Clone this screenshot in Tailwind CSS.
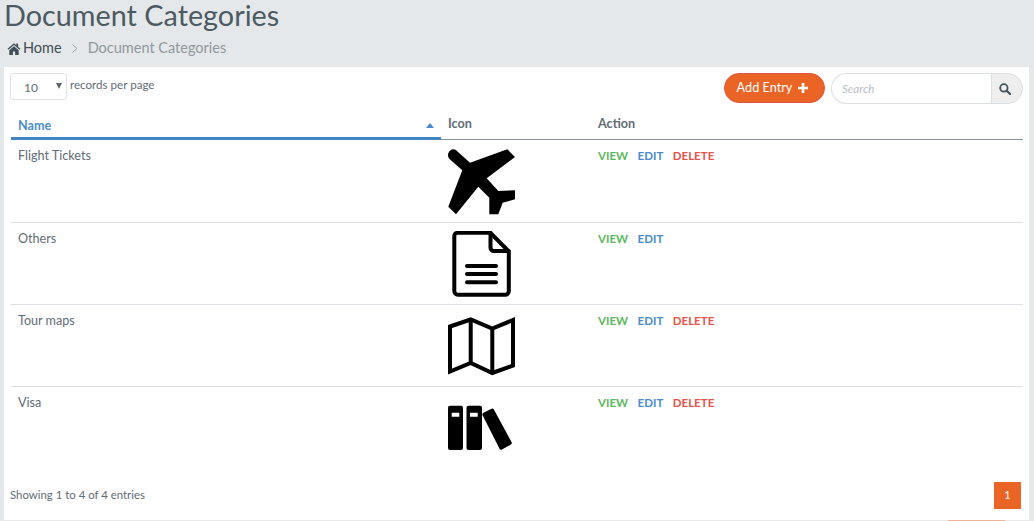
<!DOCTYPE html>
<html lang="en">

<head>
    <meta charset="UTF-8">
    <meta name="viewport" content="width=device-width, initial-scale=1.0">
    <title>Document Categories</title>
    <script src="https://cdn.jsdelivr.net/npm/@tailwindcss/browser@4"></script>
</head>

<body class="bg-[#e5e8ea] font-['Lato',sans-serif] text-[#5f6c74] overflow-hidden h-[521px]">

    <!-- Page heading -->
    <div class="h-[67px] pl-[4px]">
        <h1 class="text-[28.8px] leading-[30px] text-[#4c5a62]">Document Categories</h1>
        <div class="flex items-center h-[20px] mt-[8px] pl-[3px] text-[14.5px]">
            <svg class="w-[14px] h-[13px] mr-[2px] text-[#3f4d55]" viewBox="0 0 24 22" fill="currentColor">
                <path d="M12 2 L1 11.5 L2.6 13.3 L12 5.2 L21.4 13.3 L23 11.5 L19 8 V2.5 H16 V5.4 Z M4 14 V22 H10 V16 H14 V22 H20 V14 L12 7.2 Z" />
            </svg>
            <a href="#" class="text-[#3f4d55]">Home</a>
            <svg class="w-[7px] h-[9px] ml-[9px] mr-[10px] text-[#9aa3a8]" viewBox="0 0 7 9" fill="none" stroke="currentColor" stroke-width="1">
                <path d="M1.5 0.5 L6 4.5 L1.5 8.5" />
            </svg>
            <span class="text-[#8f989d]">Document Categories</span>
        </div>
    </div>

    <!-- Card -->
    <div class="bg-white ml-[4px] mr-[5px] h-[453px] pt-[6px] flex flex-col">

        <!-- Toolbar -->
        <div class="flex items-start h-[40px] pl-[6px] pr-[6px]">
            <div class="flex items-start">
                <div class="relative w-[57px] h-[27px] border border-[#dfe3e5] rounded-[3px] text-[12px] leading-[27px] pl-[13px]">
                    10
                    <span class="absolute right-[4px] top-[9px] w-0 h-0 border-l-[3.5px] border-r-[3.5px] border-t-[6px] border-l-transparent border-r-transparent border-t-[#5c666c]"></span>
                </div>
                <span class="ml-[3px] mt-[4px] text-[11.6px] leading-[16px]">records per page</span>
            </div>
            <div class="ml-auto flex items-start">
                <button class="flex items-center justify-center w-[101px] h-[30px] pb-[1px] pr-[4px] rounded-full bg-[#ea6426] border border-[#e4503f] text-white text-[12.7px]">
                    Add Entry
                    <svg class="w-[10px] h-[10px] ml-[6px]" viewBox="0 0 10 10" fill="white">
                        <path d="M3.7 0 H6.3 V3.7 H10 V6.3 H6.3 V10 H3.7 V6.3 H0 V3.7 H3.7 Z" />
                    </svg>
                </button>
                <div class="flex w-[192px] h-[31px] ml-[6px]">
                    <div class="flex-1 border border-r-0 border-[#dcdfe1] rounded-l-full pl-[10px] text-[11.5px] italic text-[#b8c0c5] leading-[29px]">Search</div>
                    <div class="w-[32px] flex items-center justify-center bg-[#eeeeee] border border-[#dcdfe1] rounded-r-full pr-[5px]">
                        <svg class="w-[12px] h-[12px]" viewBox="0 0 13 13" fill="none" stroke="#46535b" stroke-width="2">
                            <circle cx="5.3" cy="5.3" r="4" />
                            <path d="M8.3 8.3 L12 12" stroke-width="2.4" stroke-linecap="round" />
                        </svg>
                    </div>
                </div>
            </div>
        </div>

        <!-- Table -->
        <div class="ml-[7px] mr-[6px] text-[12.6px]">
            <div class="grid grid-cols-[430px_150px_1fr] h-[27px] border-b border-[#8a9299] font-bold">
                <div class="relative h-[27px] border-b-[3px] border-[#4285c5] pl-[7px] pt-[4px] text-[#4a8ccb]">
                    Name
                    <span class="absolute right-[7px] top-[10px] w-0 h-0 border-l-[4px] border-r-[4px] border-b-[5px] border-l-transparent border-r-transparent border-b-[#4a8ccb]"></span>
                </div>
                <div class="pl-[7px] pt-[2px]">Icon</div>
                <div class="pl-[7px] pt-[2px]">Action</div>
            </div>

            <!-- Flight Tickets -->
            <div class="grid grid-cols-[430px_150px_1fr] h-[83px] border-b border-[#dde1e3]">
                <div class="pl-[7px] pt-[7px]">Flight Tickets</div>
                <div class="pl-[7px] pt-[9px]">
                    <svg class="w-[68px] h-[68px]" viewBox="0 0 68 68" fill="black">
                        <path d="M1.5 10 C-1 7 0 3.5 2 1.8 C4 0 6 0 7.5 0.8 L22 13.7 L59.3 0.3 L67 8 L38.7 29.3 L50.3 42 L67 41.3 V50.3 L54.7 53.7 L50.3 65.3 H41.3 V48.7 L30.3 37.7 L8 65.3 L0.3 57.7 L14.3 21.3 Z" />
                    </svg>
                </div>
                <div class="flex gap-[9.5px] pl-[7px] pt-[9px] text-[11.5px] leading-[14px] font-bold">
                    <a href="#" class="text-[#5cb85c]">VIEW</a>
                    <a href="#" class="text-[#4a8ccb]">EDIT</a>
                    <a href="#" class="text-[#e5534b]">DELETE</a>
                </div>
            </div>

            <!-- Others -->
            <div class="grid grid-cols-[430px_150px_1fr] h-[82px] border-b border-[#dde1e3]">
                <div class="pl-[7px] pt-[7px]">Others</div>
                <div class="pl-[7px] pt-[8px]">
                    <svg class="w-[68px] h-[68px]" viewBox="0 0 68 68" fill="none" stroke="black" stroke-width="4" stroke-linecap="round" stroke-linejoin="round">
                        <path d="M9.5 1.8 H42.5 L60.8 20.5 V60 A3.7 3.7 0 0 1 57 63.8 H10 A3.7 3.7 0 0 1 6.3 60 V5 A3.2 3.2 0 0 1 9.5 1.8 Z" />
                        <path d="M42.5 2 V16.5 A3.5 3.5 0 0 0 46 20 H60.5" />
                        <path d="M19 35 H48 M19 43 H48 M19 51.3 H48" />
                    </svg>
                </div>
                <div class="flex gap-[9.5px] pl-[7px] pt-[9px] text-[11.5px] leading-[14px] font-bold">
                    <a href="#" class="text-[#5cb85c]">VIEW</a>
                    <a href="#" class="text-[#4a8ccb]">EDIT</a>
                </div>
            </div>

            <!-- Tour maps -->
            <div class="grid grid-cols-[430px_150px_1fr] h-[82px] border-b border-[#dde1e3]">
                <div class="pl-[7px] pt-[7px]">Tour maps</div>
                <div class="pl-[7px] pt-[8px]">
                    <svg class="w-[68px] h-[68px]" viewBox="0 0 68 68" fill="none" stroke="black" stroke-width="4">
                        <path d="M2 13.5 L22.7 6.5 L44.3 15.5 L65 7 V52.5 L44.3 60 L22.7 50 L2 58.5 Z" />
                        <path d="M22.7 6.5 V50 M44.3 15.5 V60" />
                    </svg>
                </div>
                <div class="flex gap-[9.5px] pl-[7px] pt-[9px] text-[11.5px] leading-[14px] font-bold">
                    <a href="#" class="text-[#5cb85c]">VIEW</a>
                    <a href="#" class="text-[#4a8ccb]">EDIT</a>
                    <a href="#" class="text-[#e5534b]">DELETE</a>
                </div>
            </div>

            <!-- Visa -->
            <div class="grid grid-cols-[430px_150px_1fr] h-[82px]">
                <div class="pl-[7px] pt-[7px]">Visa</div>
                <div class="pl-[7px] pt-[8px]">
                    <svg class="w-[68px] h-[68px]" viewBox="0 0 68 68" fill="black">
                        <path fill-rule="evenodd" d="M2 10.7 H13 A2 2 0 0 1 15 12.7 V53 A2 2 0 0 1 13 55 H2 A2 2 0 0 1 0 53 V12.7 A2 2 0 0 1 2 10.7 Z M3.7 17.7 V21.7 H11.3 V17.7 Z" />
                        <path fill-rule="evenodd" d="M20.5 10.7 H32 A2 2 0 0 1 34 12.7 V53 A2 2 0 0 1 32 55 H20.5 A2 2 0 0 1 18.5 53 V12.7 A2 2 0 0 1 20.5 10.7 Z M22 17.7 V21.7 H29.7 V17.7 Z" />
                        <path d="M35.5 17.7 L43.5 13.8 A2 2 0 0 1 46 14.7 L63.5 47 A2 2 0 0 1 62.6 49.7 L54 54.6 A2 2 0 0 1 51.4 53.6 L34.6 20.3 A2 2 0 0 1 35.5 17.7 Z" />
                    </svg>
                </div>
                <div class="flex gap-[9.5px] pl-[7px] pt-[9px] text-[11.5px] leading-[14px] font-bold">
                    <a href="#" class="text-[#5cb85c]">VIEW</a>
                    <a href="#" class="text-[#4a8ccb]">EDIT</a>
                    <a href="#" class="text-[#e5534b]">DELETE</a>
                </div>
            </div>
        </div>

        <!-- Footer -->
        <div class="flex items-start justify-between pl-[6px] pr-[8px] mt-[13px]">
            <span class="text-[11.4px] leading-[16px] mt-[5px]">Showing 1 to 4 of 4 entries</span>
            <span class="w-[27px] h-[27px] flex items-center justify-center bg-[#ea6426] text-white text-[11px]">1</span>
        </div>
    </div>

    <div class="h-px ml-[948px] w-[57px] bg-[#eeb295]"></div>
</body>

</html>
